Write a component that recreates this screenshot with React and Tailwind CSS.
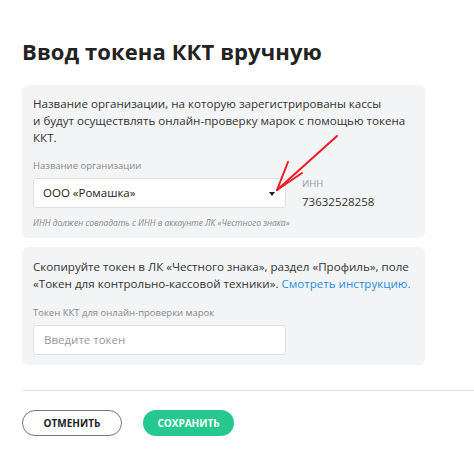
export default function App() {
  return (
    <div className="relative w-[474px] h-[469px] bg-white font-['Open_Sans',sans-serif] text-[#222]">
      <div className="pl-[22px] pt-[36px]">
        <h1 className="text-[22px] font-bold leading-[30px] text-[#222] tracking-[0.1px]">Ввод токена ККТ вручную</h1>
        <div className="mt-[19px] w-[403px] rounded-[6px] bg-[#f3f4f6] pl-[11px] pr-[6px] pt-[10px] pb-[9px]">
          <p className="text-[11.6px] leading-[17px] text-[#333]">
            Название организации, на которую зарегистрированы кассы<br />и будут осуществлять онлайн-проверку марок с помощью токена ККТ.
          </p>
          <div className="mt-[13px] text-[9.5px] leading-[13px] text-[#888]">Название организации</div>
          <div className="mt-[6px] flex items-start">
            <div className="flex h-[30px] w-[253px] items-center justify-between rounded-[3px] border border-[#e0e0e0] bg-white pl-[9px] pr-[10px]">
              <span className="text-[11.5px] text-[#222]">ООО «Ромашка»</span>
              <span className="mt-[2px] h-0 w-0 border-x-[3.5px] border-t-[4px] border-x-transparent border-t-[#222]"></span>
            </div>
            <div className="ml-[16px] mt-[-1px]">
              <div className="text-[9.5px] leading-[14px] text-[#999]">ИНН</div>
              <div className="mt-[3px] text-[11.5px] leading-[16px] text-[#333]">73632528258</div>
            </div>
          </div>
          <div className="mt-[7px] text-[8.5px] italic leading-[12px] text-[#888]">ИНН должен совпадать с ИНН в аккаунте ЛК «Честного знака»</div>
        </div>
        <div className="mt-[9px] w-[403px] rounded-[6px] bg-[#f3f4f6] pl-[11px] pr-[6px] pt-[11px] pb-[10px]">
          <p className="text-[11.6px] leading-[17px] text-[#333]">
            Скопируйте токен в ЛК «Честного знака», раздел «Профиль», поле «Токен для контрольно-кассовой техники». <span className="text-[#1e8fe1]">Смотреть инструкцию.</span>
          </p>
          <div className="mt-[14px] text-[9.5px] leading-[13px] text-[#888]">Токен ККТ для онлайн-проверки марок</div>
          <div className="mt-[6px] flex h-[30px] w-[253px] items-center rounded-[3px] border border-[#e0e0e0] bg-white pl-[10px]">
            <span className="text-[11.5px] text-[#999]">Введите токен</span>
          </div>
        </div>
        <div className="mt-[25px] h-px bg-[#e2e2e2]"></div>
        <div className="mt-[19px] flex gap-[21px]">
          <button className="flex h-[26px] w-[100px] items-center justify-center rounded-full border border-[#777] bg-white text-[10px] font-bold text-[#222]">ОТМЕНИТЬ</button>
          <button className="flex h-[26px] w-[91px] items-center justify-center rounded-full bg-[#25c98f] text-[10px] font-bold text-white">СОХРАНИТЬ</button>
        </div>
      </div>
      <svg className="absolute left-0 top-0" width="474" height="469" viewBox="0 0 474 469">
        <g stroke="#ee1c24" strokeWidth="2" strokeLinecap="round" fill="none">
          <path d="M337 136 L277 190" />
          <path d="M277 190 L288 162" />
          <path d="M277 190 L302 173" />
        </g>
      </svg>
    </div>
  );
}
